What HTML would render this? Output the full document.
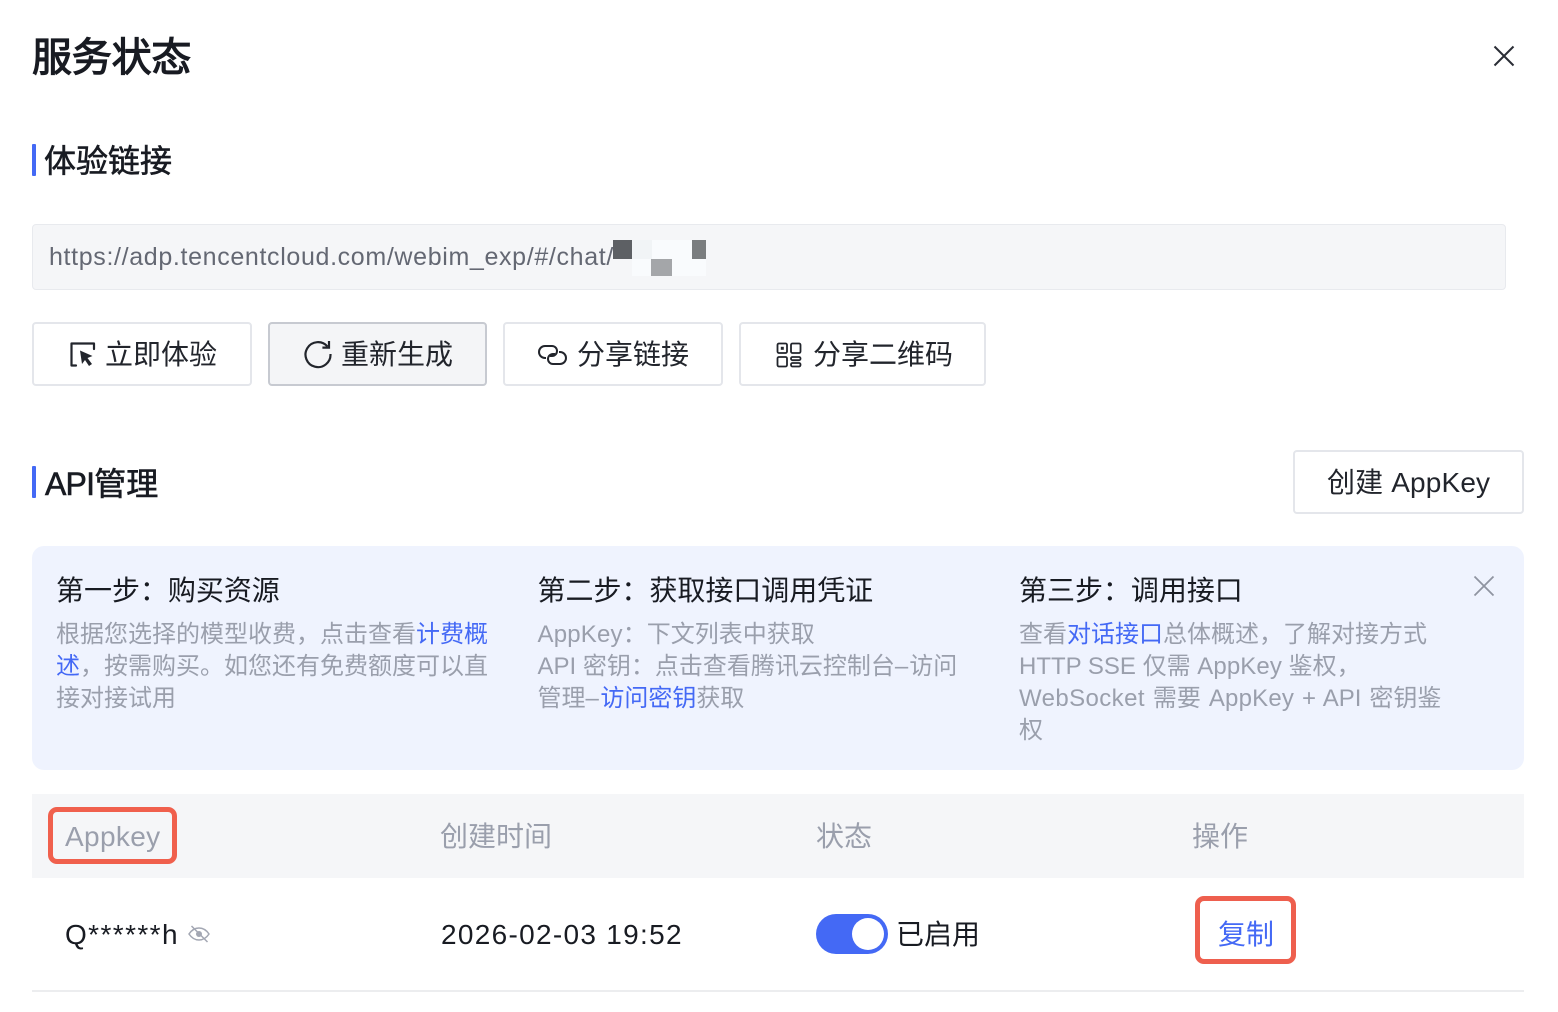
<!DOCTYPE html>
<html lang="zh-CN">
<head>
<meta charset="utf-8">
<title>服务状态</title>
<style>
html,body{margin:0;padding:0;background:#fff;}
body{width:1558px;height:1012px;position:relative;overflow:hidden;font-family:"Liberation Sans","Noto Sans CJK SC",sans-serif;color:#181b22;}
.a{position:absolute;white-space:nowrap;}
.bar{position:absolute;left:32px;width:4px;height:32px;background:#4469f5;border-radius:1px;}
.btn{position:absolute;top:322px;height:64px;box-sizing:border-box;border:2px solid #e4e6eb;border-radius:4px;background:#fff;}
.btn .t{position:absolute;top:1px;line-height:60px;font-size:28px;color:#22252c;white-space:nowrap;}
.btn svg{position:absolute;}
.h{font-size:32px;line-height:40px;color:#181b22;-webkit-text-stroke:.6px #181b22;}
.st{font-size:28px;line-height:36px;color:#181b22;letter-spacing:-.03px;}
.d{font-size:24px;line-height:32px;color:#9a9fac;}
.d a{color:#4469f5;text-decoration:none;}
.th{font-size:28px;line-height:36px;color:#9a9fac;}
.td{font-size:28px;line-height:36px;color:#181b22;}
.td.link{color:#4469f5;}
</style>
</head>
<body>

<div class="a" style="left:32px;top:33px;font-size:40px;line-height:50px;letter-spacing:-.2px;color:#181b22;-webkit-text-stroke:1.200px #181b22;">服务状态</div>
<svg class="a" style="left:1492px;top:44px" width="24" height="24" viewBox="0 0 24 24"><path d="M2.500 2.500L21.500 21.500M21.500 2.500L2.500 21.500" stroke="#2a2d35" stroke-width="2" fill="none"/></svg>

<div class="bar" style="top:144px"></div>
<div class="a h" style="left:44px;top:141px;">体验链接</div>

<div class="a" style="left:32px;top:224px;width:1474px;height:66px;box-sizing:border-box;background:#f5f6f8;border:1px solid #e8eaee;border-radius:4px;"></div>
<div class="a" style="left:49px;top:240px;font-size:25px;line-height:34px;color:#646873;letter-spacing:.65px;">https://adp.tencentcloud.com/webim_exp/#/chat/</div>
<div class="a" style="left:632px;top:240px;width:74px;height:36px;background:#f9fbfd;"></div>
<div class="a" style="left:613px;top:240px;width:19px;height:19px;background:#5d6064;"></div>
<div class="a" style="left:632px;top:240px;width:20px;height:19px;background:#f1f4f6;"></div>
<div class="a" style="left:651px;top:259px;width:21px;height:17px;background:#a4a6a9;"></div>
<div class="a" style="left:692px;top:240px;width:14px;height:19px;background:#7a7d7f;"></div>

<div class="btn" style="left:32px;width:220px;">
  <svg style="left:35px;top:17px" width="28" height="28" viewBox="0 0 28 28"><path d="M7 24.500H2.500V2.500H25V8" fill="none" stroke="#22252c" stroke-width="2.200" stroke-linejoin="round" stroke-linecap="round"/><path d="M11 9.500L23.500 15L18.500 17L23 23L20 25L16 19L13 23Z" fill="#22252c"/></svg>
  <div class="t" style="left:71px;">立即体验</div>
</div>
<div class="btn" style="left:268px;width:219px;background:#f4f5f7;border-color:#c7cad1;">
  <svg style="left:33px;top:15px" width="30" height="30" viewBox="0 0 30 30"><path d="M24.500 7.500A12.500 12.500 0 1 0 27.500 15" fill="none" stroke="#22252c" stroke-width="2.200"/><path d="M26 2V8.600H19.400" fill="none" stroke="#22252c" stroke-width="2.200"/></svg>
  <div class="t" style="left:71px;">重新生成</div>
</div>
<div class="btn" style="left:503px;width:220px;">
  <svg style="left:33px;top:21px" width="29" height="20" viewBox="0 0 29 20"><path d="M8 13H7A6 6 0 0 1 7 1H14A5 5 0 0 1 14 11H12" fill="none" stroke="#22252c" stroke-width="2"/><path d="M21 7H22A6 6 0 0 1 22 19H15A5 5 0 0 1 15 9H17" fill="none" stroke="#22252c" stroke-width="2"/></svg>
  <div class="t" style="left:72px;">分享链接</div>
</div>
<div class="btn" style="left:739px;width:247px;">
  <svg style="left:35px;top:18px" width="26" height="26" viewBox="0 0 26 26"><g fill="none" stroke="#22252c" stroke-width="1.800"><rect x="1.500" y="1.500" width="9.500" height="9.500" rx="1.500"/><rect x="15" y="1.500" width="9.500" height="9.500" rx="1.500"/><rect x="1.500" y="15" width="9.500" height="9.500" rx="1.500"/><rect x="15" y="15" width="9.500" height="3.200" rx="1.500"/><rect x="15" y="21" width="9.500" height="3.500" rx="1.500"/></g><rect x="4.800" y="4.800" width="3" height="3" fill="#22252c"/></svg>
  <div class="t" style="left:72px;">分享二维码</div>
</div>

<div class="bar" style="top:466px"></div>
<div class="a h" style="left:45px;top:464px;"><span style="letter-spacing:-.8px">API</span>管理</div>
<div class="btn" style="left:1293px;top:450px;width:231px;">
  <div class="t" style="left:32px;letter-spacing:.15px;">创建 AppKey</div>
</div>

<div class="a" style="left:32px;top:546px;width:1492px;height:224px;background:#eff3fe;border-radius:12px;"></div>
<div class="a st" style="left:56px;top:573px;">第一步：购买资源</div>
<div class="a d" style="left:56px;top:619px;">根据您选择的模型收费，点击查看<a>计费概</a><br><a>述</a>，按需购买。如您还有免费额度可以直<br>接对接试用</div>
<div class="a st" style="left:537.500px;top:573px;">第二步：获取接口调用凭证</div>
<div class="a d" style="left:537.500px;top:619px;"><span style="letter-spacing:.2px">AppKey</span>：下文列表中获取<br>API 密钥：点击查看腾讯云控制台<span style="letter-spacing:1px">–</span>访问<br>管理<span style="letter-spacing:1.500px">–</span><a>访问密钥</a>获取</div>
<div class="a st" style="left:1019px;top:573px;">第三步：调用接口</div>
<div class="a d" style="left:1019px;top:619px;">查看<a>对话接口</a>总体概述，了解对接方式<br>HTTP SSE 仅需 <span style="letter-spacing:.1px">AppKey</span> 鉴权，<br><span style="word-spacing:1.300px"><span style="letter-spacing:.4px">WebSocket</span> 需要 <span style="letter-spacing:.2px">AppKey</span> + API 密钥鉴</span><br>权</div>
<svg class="a" style="left:1473px;top:575px" width="22" height="22" viewBox="0 0 22 22"><path d="M1.500 1.500L20.500 20.500M20.500 1.500L1.500 20.500" stroke="#8f94a1" stroke-width="1.800" fill="none"/></svg>

<div class="a" style="left:32px;top:794px;width:1492px;height:84px;background:#f5f6f8;"></div>
<div class="a th" style="left:65px;top:819px;letter-spacing:.35px;">Appkey</div>
<div class="a" style="left:48px;top:807px;width:129px;height:57px;box-sizing:border-box;border:5px solid #f0604d;border-radius:9px;"></div>
<div class="a th" style="left:440px;top:819px;">创建时间</div>
<div class="a th" style="left:816px;top:819px;">状态</div>
<div class="a th" style="left:1192px;top:819px;">操作</div>

<div class="a td" style="left:65px;top:917px;letter-spacing:1.400px;">Q******h</div>
<svg class="a" style="left:188px;top:925px" width="22" height="18" viewBox="0 0 22 18"><g fill="none" stroke="#a3a7b3" stroke-width="1.500"><path d="M1 9C4 4.500 7.500 3 11 3S18 4.500 21 9C18 13.500 14.500 15 11 15S4 13.500 1 9Z"/><path d="M3.500 1L19.500 17"/></g><circle cx="11" cy="9" r="3" fill="#a3a7b3"/></svg>
<div class="a td" style="left:441px;top:917px;letter-spacing:1.300px;">2026-02-03 19:52</div>
<div class="a" style="left:816px;top:914px;width:72px;height:40px;border-radius:20px;background:#4469f5;"></div>
<div class="a" style="left:852px;top:918px;width:32px;height:32px;border-radius:50%;background:#fff;"></div>
<div class="a td" style="left:896px;top:917px;">已启用</div>
<div class="a td link" style="left:1218px;top:917px;">复制</div>
<div class="a" style="left:1195px;top:896px;width:101px;height:68px;box-sizing:border-box;border:5px solid #ee5f4e;border-radius:9px;"></div>
<div class="a" style="left:32px;top:990px;width:1492px;height:2px;background:#ecedef;"></div>

</body>
</html>
